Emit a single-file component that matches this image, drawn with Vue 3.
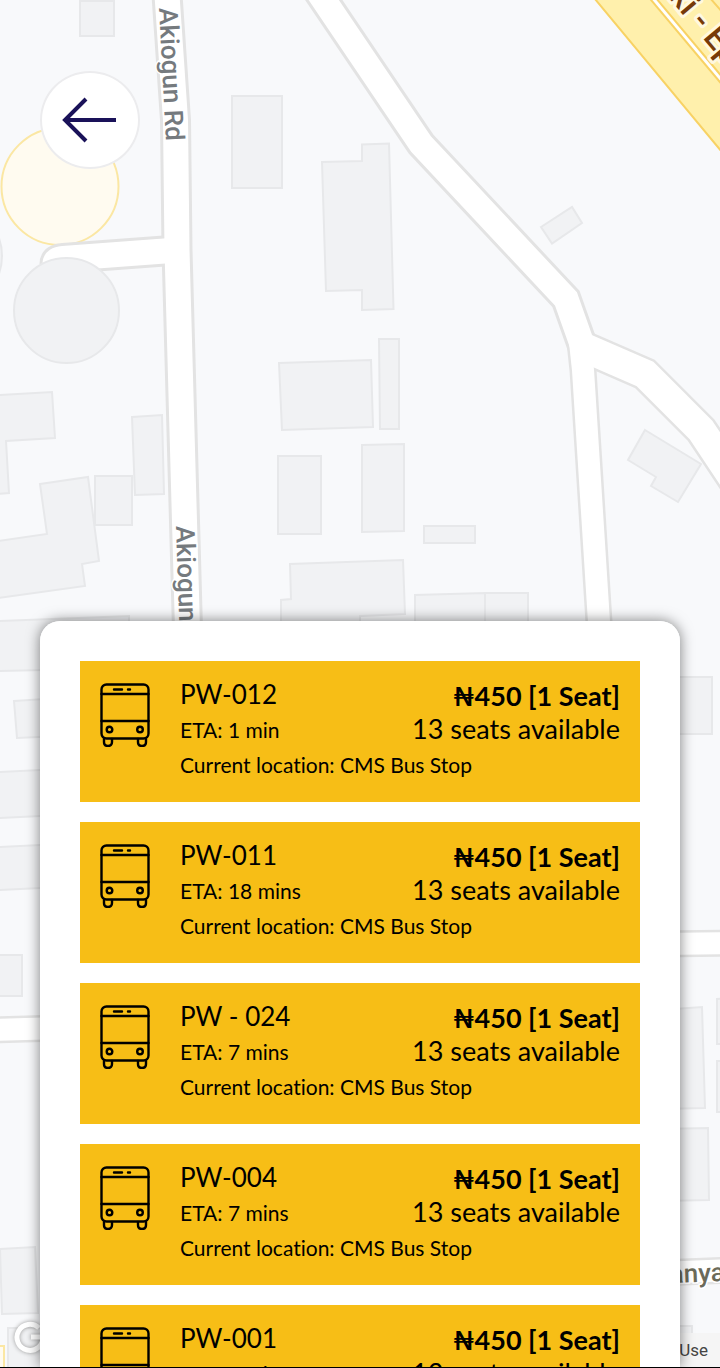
<script setup>
import { ref } from 'vue';

const buses = ref([
    { name: 'PW-012', eta: '1 min' },
    { name: 'PW-011', eta: '18 mins' },
    { name: 'PW - 024', eta: '7 mins' },
    { name: 'PW-004', eta: '7 mins' },
    { name: 'PW-001', eta: '9 mins' },
]);

const selected = ref(null);

// building outlines
const buildings = [
    'M80 1H114V36H80Z',
    'M232 96H282V188H232Z',
    'M322 162L362 161V144.500L389 143.500L393.500 309L362 310V290L326 291Z',
    'M541 227L572 207L582 223L552 243.500Z',
    'M279 363L371 360L373 427L282 430Z',
    'M379 339H399V429H380Z',
    'M278 456H321V534H278Z',
    'M362 445L404 444V531L362 532Z',
    'M424 526H475V543H424Z',
    'M281 640V600L291 599L290 564L403 560L405 614L360 616V640Z',
    'M415 640V595L485 593V640Z',
    'M485 593H528V640H485Z',
    'M645 430L701 464L678 502L651 486L656 477L628 460Z',
    'M-2 395L52 392L55 438L6 441L9 493L-2 494Z',
    'M132 417L162 415L164 494L135 495Z',
    'M95 476H132V525H95Z',
    'M40 484L88 477L99 561L82 564L85 586L-2 598V541L47 534Z',
    'M-2 621L129 616V668L-2 671Z',
    'M14 701L60 698V736L17 738Z',
    'M-2 772L60 769V815L-2 818Z',
    'M-2 847L60 844V887L-2 890Z',
    'M-2 955H22V996H-2Z',
    'M0 1249L35 1247L38 1313L2 1314Z',
    'M8 1328H60V1380H8Z',
    'M660 677H712V734H660Z',
    'M660 1010L702 1007L705 1108L660 1109Z',
    'M730 998L717 999V1044H730Z',
    'M730 1061H717V1112H730Z',
    'M660 1129L708 1128L709 1200L660 1201Z',
    'M660 1326H692V1380H660Z',
];

const roads = [
    { d: 'M167 -5L175.500 120L177 250L187.500 630' },
    { d: 'M55 264Q55 259 63 258.500L178 250' },
    { d: 'M317 -10L421 144L566 299L583 347' },
    { d: 'M580 342L583 370L599.500 630', narrow: true },
    { d: 'M583 347L645 374L701 430L735 481', wide: true },
    { d: 'M-10 1030L60 1028', narrow: true },
    { d: 'M660 944L730 943', narrow: true },
    { d: 'M660 1273L730 1270', narrow: true },
];
</script>


<template>
    <main class="screen">
        <svg class="map" viewBox="0 0 720 1368" preserveAspectRatio="xMidYMin slice" aria-hidden="true">
            <circle cx="60" cy="186.500" r="58.500" class="area"/>
            <rect x="-10" y="1346" width="14" height="40" class="area"/>
            <circle cx="-49" cy="256" r="51" class="building"/>
            <g class="road-edge">
                <path
                    v-for="(road, i) in roads"
                    :key="i"
                    :d="road.d"
                    :class="{ wide: road.wide, narrow: road.narrow }"
                />
            </g>
            <g class="road-fill">
                <path
                    v-for="(road, i) in roads"
                    :key="i"
                    :d="road.d"
                    :class="{ wide: road.wide, narrow: road.narrow }"
                />
            </g>
            <circle cx="66.500" cy="310.500" r="52.500" class="building"/>
            <path v-for="(d, i) in buildings" :key="i" :d="d" class="building"/>

            <path d="M595 0L722 152V-10H587Z" class="highway"/>
            <path d="M595 -1L722 152M710 -2L724 14" class="highway-edge"/>
            <path d="M651 -4L724 83" class="highway-gap"/>
            <path d="M651 -4L724 83" class="highway-line"/>

            <text transform="translate(159 8) rotate(87)" class="street">Akiogun Rd</text>
            <text transform="translate(176 526) rotate(88)" class="street">Akiogun Rd</text>
            <text transform="translate(725 1281) rotate(-2)" text-anchor="end" class="street road-name">Manya</text>
            <text transform="translate(668 -3) rotate(50)" class="highway-name">ki - Epe</text>
        </svg>

        <svg class="brand" viewBox="0 0 40 40" aria-hidden="true">
            <path d="M29 11A13 13 0 1 0 33 20H21"/>
        </svg>
        <a href="#" class="terms">Use</a>

        <header class="top">
            <button type="button" class="back" aria-label="Back">
                <svg viewBox="0 0 60 50">
                    <path d="M26 4L5 25L26 46M5 25H56"/>
                </svg>
            </button>
        </header>

        <section class="sheet">
            <ul class="list">
                <li v-for="bus in buses" :key="bus.name">
                    <button
                        @click="selected = bus.name"
                        :aria-pressed="selected === bus.name"
                        type="button"
                        class="bus"
                    >
                        <svg class="bus__icon" viewBox="0 0 50 64" aria-hidden="true">
                            <rect x="1.500" y="1.500" width="47" height="54" rx="5"/>
                            <path d="M1.500 11H48.500M1.500 38H48.500"/>
                            <path d="M14 6.500H22M28 6.500H30"/>
                            <circle cx="9.500" cy="46.500" r="2.800"/>
                            <circle cx="40" cy="46.500" r="2.800"/>
                            <path d="M4 56V59Q4 63 8 63Q12 63 12 59V56M38 56V59Q38 63 42 63Q46 63 46 59V56"/>
                        </svg>
                        <span class="bus__info">
                            <span class="bus__name">{{ bus.name }}</span>
                            <strong class="bus__price">₦450 [1 Seat]</strong>
                            <span class="bus__eta">ETA: {{ bus.eta }}</span>
                            <span class="bus__seats">13 seats available</span>
                            <span class="bus__location">Current location: CMS Bus Stop</span>
                        </span>
                    </button>
                </li>
            </ul>
        </section>
    </main>
</template>


<style>
    body {
        margin: 0;
    }
</style>

<style scoped>
    .screen {
        position: relative;
        display: flex;
        flex-direction: column;
        box-sizing: border-box;
        height: 100vh;
        overflow: hidden;
        border-bottom: 1px solid #000;
        background-color: #f8f9fb;
        color: #000;
        font-family: Lato, "Open Sans", sans-serif;
    }

    /* Map */
    .map {
        position: absolute;
        top: 0;
        left: 0;
        width: 100%;
        height: 100%;
    }

    .building {
        fill: #f1f2f4;
        stroke: #e7e8ea;
        stroke-width: 2;
    }

    .area {
        fill: #fffbf0;
        stroke: #fbe7a3;
        stroke-width: 2;
    }

    .road-edge path {
        fill: none;
        stroke: #e3e3e3;
        stroke-width: 31;
    }

    .road-edge .wide {
        stroke-width: 34;
    }

    .road-edge .narrow {
        stroke-width: 27;
    }

    .road-fill path {
        fill: none;
        stroke: #fff;
        stroke-width: 25;
    }

    .road-fill .wide {
        stroke-width: 29;
    }

    .road-fill .narrow {
        stroke-width: 22;
    }

    .highway {
        fill: #fff0ac;
    }

    .highway-edge {
        fill: none;
        stroke: #f8d264;
        stroke-width: 2;
    }

    .highway-gap {
        stroke: #f8d264;
        stroke-width: 7;
    }

    .highway-line {
        stroke: #fff;
        stroke-width: 3;
    }

    .street {
        fill: #757a7e;
        stroke: #fff;
        stroke-width: 3;
        paint-order: stroke;
        font-family: Roboto, sans-serif;
        font-size: 26px;
        font-weight: 500;
    }

    .road-name {
        fill: #6b6a59;
    }

    .highway-name {
        fill: #773a08;
        stroke: #fff8df;
        stroke-width: 6;
        stroke-linejoin: round;
        paint-order: stroke;
        font-family: Roboto, sans-serif;
        font-size: 33px;
        font-weight: 500;
    }

    .brand {
        position: absolute;
        bottom: 10px;
        left: 10px;
        width: 40px;
        height: 40px;
        fill: none;
        stroke: #fff;
        stroke-width: 5;
        filter: drop-shadow(0 0 2px #999);
    }

    .terms {
        position: absolute;
        right: 0;
        bottom: 0;
        padding: 0 12px 0 4px;
        background-color: #f5f5f5;
        color: #444;
        font-family: Roboto, sans-serif;
        font-size: 17px;
        line-height: 34px;
        text-decoration: none;
    }

    /* Back button */
    .top {
        position: relative;
        flex: none;
        box-sizing: border-box;
        min-height: 621px;
        padding: 71px 40px;
    }

    .back {
        display: flex;
        align-items: center;
        justify-content: center;
        box-sizing: border-box;
        width: 100px;
        height: 98px;
        padding: 0;
        border: 2px solid #ececee;
        border-radius: 50%;
        background-color: #fff;
        cursor: pointer;
    }

    .back svg {
        width: 60px;
        height: 50px;
        fill: none;
        stroke: #1a1259;
        stroke-width: 4;
    }

    /* Bus list */
    .sheet {
        position: relative;
        flex: 1;
        min-height: 0;
        margin: 0 40px;
        padding: 40px 40px 0;
        overflow-y: auto;
        scrollbar-width: none;
        border-radius: 20px 20px 0 0;
        background-color: #fff;
        box-shadow: 0 0 14px rgba(0, 0, 0, 0.5);
    }

    .list {
        display: flex;
        flex-direction: column;
        gap: 20px;
        margin: 0;
        padding: 0 0 20px;
        list-style: none;
    }

    .bus {
        display: flex;
        align-items: flex-start;
        gap: 30px;
        width: 100%;
        padding: 16px 20px 20px;
        border: 0;
        background-color: #f7be16;
        color: inherit;
        font-family: inherit;
        font-variant-ligatures: none;
        text-align: left;
        cursor: pointer;
    }

    .bus__icon {
        flex: none;
        width: 50px;
        height: 64px;
        margin-top: 6px;
        fill: none;
        stroke: #000;
        stroke-width: 2.4;
        stroke-linecap: round;
    }

    .bus__info {
        display: grid;
        flex: 1;
        grid-template-columns: 1fr auto;
        grid-auto-rows: 35px;
        font-size: 21px;
        line-height: 35px;
    }

    .bus__name {
        font-size: 26px;
    }

    .bus__price,
    .bus__seats {
        font-size: 27px;
        line-height: 33px;
        text-align: right;
    }

    .bus__price {
        align-self: end;
    }

    .bus__location {
        grid-column: 1 / -1;
    }
</style>
